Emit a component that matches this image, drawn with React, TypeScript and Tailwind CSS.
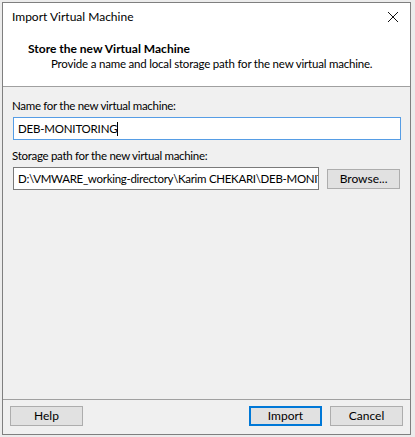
import React from 'react';

const font = { fontFamily: '"Segoe UI", Lato, "Liberation Sans", sans-serif' };

const Btn = ({ label, primary }: { label: string; primary?: boolean }) => (
  <button
    className={
      primary
        ? 'w-[73px] h-[20px] bg-[#e1e1e1] border-2 border-[#0078d7] text-[12px] text-black leading-none'
        : 'w-[73px] h-[20px] bg-[#e1e1e1] border border-[#adadad] text-[12px] text-black leading-none'
    }
  >
    {label}
  </button>
);

const App = () => {
  return (
    <div className="w-[415px] h-[437px] bg-[#ececec] pt-[2px] pl-[2px]" style={font}>
      <div className="w-[409px] h-[433px] border border-[#7f7f7f] bg-[#f0f0f0] flex flex-col">
        {/* title + header */}
        <div className="bg-white h-[84px] border-b border-[#a0a0a0]">
          <div className="flex items-center justify-between h-[28px] pl-[9px] pr-[8px]">
            <span className="text-[12px] text-black">Import Virtual Machine</span>
            <svg width="12" height="12" viewBox="0 0 12 12" className="mr-[3px]">
              <path d="M1 1 L11 11 M11 1 L1 11" stroke="#111" strokeWidth="1" />
            </svg>
          </div>
          <div className="pl-[25px] pt-[10px] text-[12px] font-bold text-black leading-[15px] whitespace-nowrap">
            Store the new Virtual Machine
          </div>
          <div className="pl-[48px] text-[11.5px] text-black leading-[15px] whitespace-nowrap tracking-[-0.2px]">
            Provide a name and local storage path for the new virtual machine.
          </div>
        </div>

        {/* body */}
        <div className="flex-1 px-[10px] pt-[11px]">
          <div className="text-[11.5px] text-black leading-[15px] tracking-[-0.3px] -ml-[1px]">
            Name for the new virtual machine:
          </div>
          <div className="mt-[4px] h-[23px] w-[388px] bg-white border border-[#569de5] flex items-center pl-[4px]">
            <span className="text-[11.5px] text-black tracking-[-0.2px]">DEB-MONITORING</span>
            <span className="w-px h-[14px] bg-black" />
          </div>
          <div className="mt-[8px] text-[11.5px] text-black leading-[15px] tracking-[-0.3px] -ml-[1px]">
            Storage path for the new virtual machine:
          </div>
          <div className="mt-[4px] flex items-center gap-[8px]">
            <div className="h-[23px] w-[307px] bg-white border border-[#7a7a7a] flex items-center pl-[4px] overflow-hidden whitespace-nowrap">
              <span className="text-[11.5px] text-black tracking-[-0.3px]">
                D:\VMWARE_working-directory\Karim CHEKARI\DEB-MONITOR
              </span>
            </div>
            <Btn label="Browse..." />
          </div>
        </div>

        {/* footer */}
        <div className="h-[35px] border-t border-[#a0a0a0] flex items-center px-[7px] pb-[2px]">
          <Btn label="Help" />
          <div className="flex-1" />
          <Btn label="Import" primary />
          <div className="w-[8px]" />
          <Btn label="Cancel" />
        </div>
      </div>
    </div>
  );
};

export default App;
